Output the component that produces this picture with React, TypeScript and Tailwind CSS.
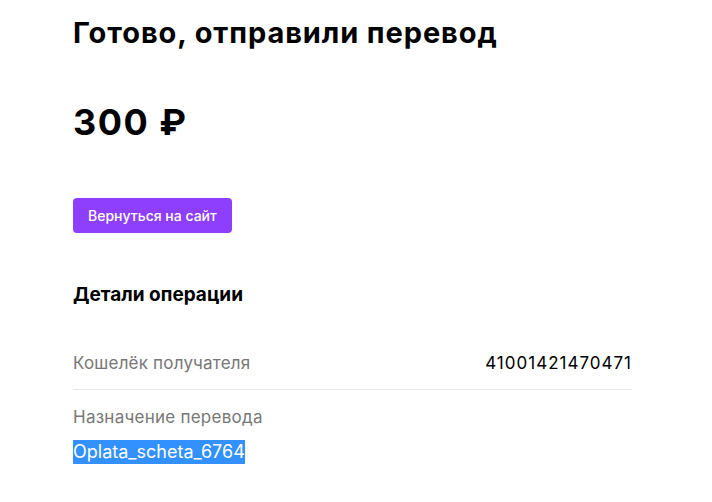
export default function App() {
  return (
    <div className="min-h-screen bg-white pl-[73px] pt-[15px] font-['Inter',sans-serif] text-black">
      <div className="w-[559px]">
        <h1 className="text-[29px] font-bold leading-[36px] tracking-[0.9px]">
          Готово, отправили перевод
        </h1>
        <div className="mt-[51px] text-[36px] font-bold leading-[40px] tracking-[1.5px]">300 ₽</div>
        <button className="mt-[56px] h-[35px] rounded-[4px] bg-[#8d3ffd] px-[15px] text-[14px] font-medium text-white">
          Вернуться на сайт
        </button>
        <h2 className="mt-[50px] text-[19px] font-bold leading-[24px]">Детали операции</h2>
        <div className="mt-[44px] flex justify-between border-b border-[#e8e8e8] pb-[14px] text-[17px] leading-[24px]">
          <span className="tracking-[0.2px] text-[#777777]">Кошелёк получателя</span>
          <span className="tracking-[1px]">41001421470471</span>
        </div>
        <div className="mt-[15px] text-[17px] leading-[24px] tracking-[0.25px] text-[#777777]">
          Назначение перевода
        </div>
        <div className="mt-[11px] text-[18px] leading-[24px]">
          <span className="inline-block bg-[#3390ff] text-white">Oplata_scheta_6764</span>
        </div>
      </div>
    </div>
  );
}
